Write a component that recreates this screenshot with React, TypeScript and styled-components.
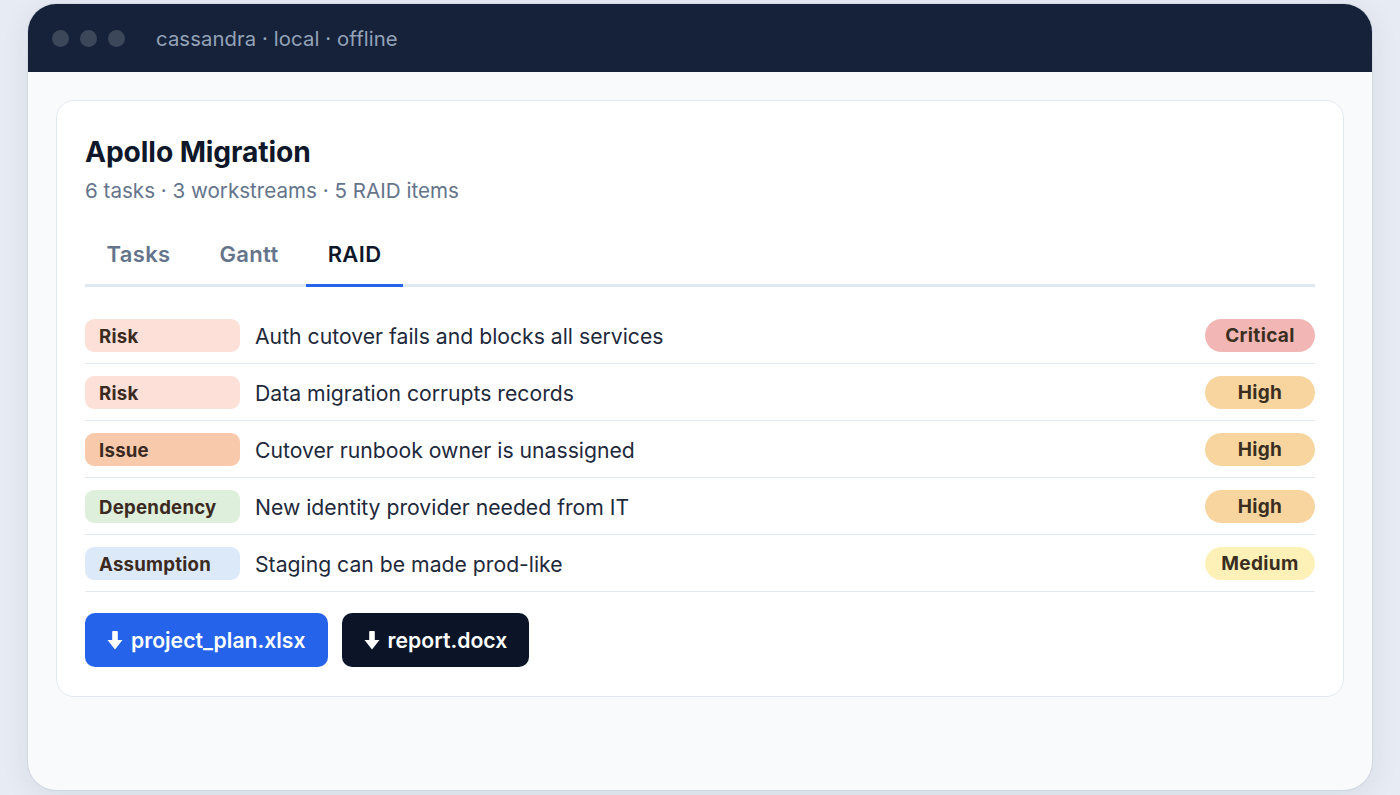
import React from "react";
import styled, { createGlobalStyle } from "styled-components";

const Global = createGlobalStyle`
  html, body { margin: 0; padding: 0; }
  body {
    background: #e7ecf4;
    font-family: Inter, "Noto Sans", "Liberation Sans", sans-serif;
    -webkit-font-smoothing: antialiased;
  }
`;

const Page = styled.div`
  padding: 4px 28px 5px;
  height: 795px;
  box-sizing: border-box;
`;

const Window = styled.div`
  height: 786px;
  border-radius: 28px;
  background: #f8fafc;
  overflow: hidden;
  display: flex;
  flex-direction: column;
  box-shadow: 0 6px 30px rgba(15, 23, 42, 0.08), 0 0 0 1px rgba(203, 213, 225, 0.5);
`;

const TitleBar = styled.div`
  height: 68px;
  flex: none;
  background: #16223a;
  display: flex;
  align-items: center;
  padding-left: 24px;
  gap: 11px;
`;

const Dot = styled.span`
  width: 17px;
  height: 17px;
  border-radius: 50%;
  background: #3c475a;
`;

const WindowTitle = styled.span`
  margin-left: 20px;
  color: #94a3b8;
  font-size: 20.3px;
  letter-spacing: 0.1px;
`;

const Body = styled.div`
  padding: 28px 28px;
`;

const Card = styled.div`
  background: #ffffff;
  border: 1.5px solid #e2e8f0;
  border-radius: 18px;
  padding: 34px 28px 29px;
`;

const Title = styled.h1`
  margin: 0;
  font-size: 28.2px;
  line-height: 34px;
  font-weight: 700;
  color: #0f172a;
  letter-spacing: -0.1px;
`;

const Subtitle = styled.div`
  margin-top: 9px;
  font-size: 20.6px;
  line-height: 26px;
  color: #64748b;
`;

const Tabs = styled.div`
  margin-top: 31px;
  display: flex;
  gap: 6px;
  border-bottom: 3px solid #e2e8f0;
`;

const Tab = styled.div<{ $active?: boolean }>`
  padding: 6px 21.5px 16px;
  font-size: 22px;
  line-height: 27px;
  font-weight: 600;
  letter-spacing: 0.35px;
  color: ${(p) => (p.$active ? "#0f172a" : "#64748b")};
  margin-bottom: -3px;
  border-bottom: 3px solid ${(p) => (p.$active ? "#2563eb" : "transparent")};
`;

const List = styled.div`
  margin-top: 20px;
`;

const Row = styled.div`
  display: flex;
  align-items: center;
  gap: 15px;
  padding: 12px 0 11px;
  border-bottom: 1.5px solid #e2e8f0;
`;

const Tag = styled.span<{ $bg: string }>`
  flex: none;
  width: 155px;
  height: 33px;
  box-sizing: border-box;
  padding-left: 14px;
  display: flex;
  align-items: center;
  border-radius: 9px;
  background: ${(p) => p.$bg};
  color: #3a2a1f;
  font-size: 18.6px;
  letter-spacing: 0.25px;
  font-weight: 700;
`;

const Desc = styled.span`
  flex: 1;
  font-size: 21.2px;
  color: #1e293b;
`;

const Severity = styled.span<{ $bg: string }>`
  flex: none;
  width: 110px;
  height: 33px;
  display: flex;
  align-items: center;
  justify-content: center;
  border-radius: 17px;
  background: ${(p) => p.$bg};
  color: #3a2e1f;
  font-size: 19px;
  letter-spacing: 0.35px;
  font-weight: 700;
`;

const Actions = styled.div`
  margin-top: 21px;
  display: flex;
  gap: 14px;
`;

const Button = styled.button<{ $dark?: boolean }>`
  height: 54px;
  padding: 0 22px;
  border: none;
  border-radius: 10px;
  background: ${(p) => (p.$dark ? "#0c1527" : "#2563eb")};
  color: #ffffff;
  font-family: inherit;
  font-size: 21.2px;
  font-weight: 600;
  display: flex;
  align-items: center;
  gap: 8px;
`;

const Arrow = () => (
  <svg width="16" height="19" viewBox="0 0 16 19" aria-hidden>
    <rect x="5.2" y="0" width="5.6" height="10" fill="#fff" rx="0.8" />
    <path d="M0.5 9 L15.5 9 L8 18.5 Z" fill="#fff" />
  </svg>
);

const tagColors: Record<string, string> = {
  Risk: "#fde0d8",
  Issue: "#f8c9ab",
  Dependency: "#deefdb",
  Assumption: "#dce9f8",
};

const sevColors: Record<string, string> = {
  Critical: "#f2b7b4",
  High: "#f8d59f",
  Medium: "#fdf1b8",
};

const items = [
  { type: "Risk", text: "Auth cutover fails and blocks all services", sev: "Critical" },
  { type: "Risk", text: "Data migration corrupts records", sev: "High" },
  { type: "Issue", text: "Cutover runbook owner is unassigned", sev: "High" },
  { type: "Dependency", text: "New identity provider needed from IT", sev: "High" },
  { type: "Assumption", text: "Staging can be made prod-like", sev: "Medium" },
];

export default function App() {
  return (
    <>
      <Global />
      <Page>
        <Window>
          <TitleBar>
            <Dot />
            <Dot />
            <Dot />
            <WindowTitle>cassandra · local · offline</WindowTitle>
          </TitleBar>
          <Body>
            <Card>
              <Title>Apollo Migration</Title>
              <Subtitle>6 tasks · 3 workstreams · 5 RAID items</Subtitle>
              <Tabs>
                <Tab>Tasks</Tab>
                <Tab>Gantt</Tab>
                <Tab $active>RAID</Tab>
              </Tabs>
              <List>
                {items.map((it, i) => (
                  <Row key={i}>
                    <Tag $bg={tagColors[it.type]}>{it.type}</Tag>
                    <Desc>{it.text}</Desc>
                    <Severity $bg={sevColors[it.sev]}>{it.sev}</Severity>
                  </Row>
                ))}
              </List>
              <Actions>
                <Button>
                  <Arrow />
                  project_plan.xlsx
                </Button>
                <Button $dark>
                  <Arrow />
                  report.docx
                </Button>
              </Actions>
            </Card>
          </Body>
        </Window>
      </Page>
    </>
  );
}
